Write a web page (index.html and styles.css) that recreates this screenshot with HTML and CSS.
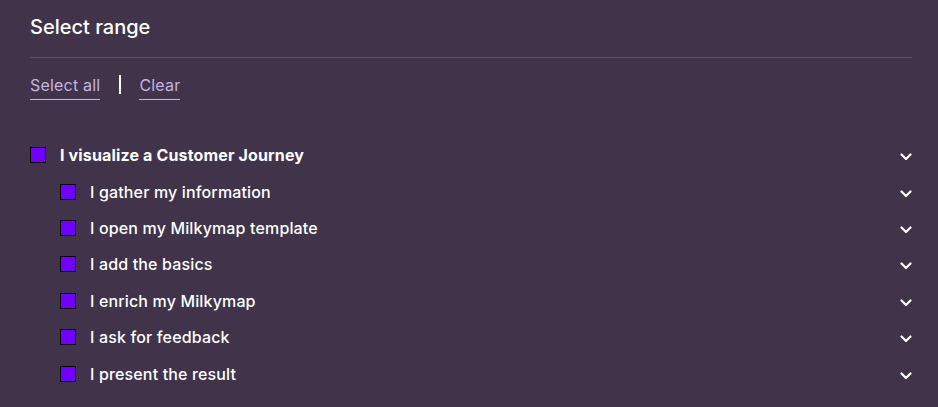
FILE: index.html
```html
<!DOCTYPE html>
<html lang="en">
<head>
<meta charset="UTF-8" />
<title>Select range</title>
<link rel="stylesheet" href="styles.css">
</head>
<body>

<div class="panel">
  <h2 class="title">Select range</h2>

  <div class="actions">
    <a class="action">Select all</a>
    <span class="sep"></span>
    <a class="action">Clear</a>
  </div>

  <ul class="tree">
    <li class="row parent">
      <span class="box"></span>
      <span class="label">I visualize a Customer Journey</span>
      <svg class="chev" viewBox="0 0 12 8"><path d="M1.5 1.5 6 6l4.5-4.5" /></svg>
    </li>
    <li class="row child">
      <span class="box"></span>
      <span class="label">I gather my information</span>
      <svg class="chev" viewBox="0 0 12 8"><path d="M1.5 1.5 6 6l4.5-4.5" /></svg>
    </li>
    <li class="row child">
      <span class="box"></span>
      <span class="label">I open my Milkymap template</span>
      <svg class="chev" viewBox="0 0 12 8"><path d="M1.5 1.5 6 6l4.5-4.5" /></svg>
    </li>
    <li class="row child">
      <span class="box"></span>
      <span class="label">I add the basics</span>
      <svg class="chev" viewBox="0 0 12 8"><path d="M1.5 1.5 6 6l4.5-4.5" /></svg>
    </li>
    <li class="row child">
      <span class="box"></span>
      <span class="label">I enrich my Milkymap</span>
      <svg class="chev" viewBox="0 0 12 8"><path d="M1.5 1.5 6 6l4.5-4.5" /></svg>
    </li>
    <li class="row child">
      <span class="box"></span>
      <span class="label">I ask for feedback</span>
      <svg class="chev" viewBox="0 0 12 8"><path d="M1.5 1.5 6 6l4.5-4.5" /></svg>
    </li>
    <li class="row child">
      <span class="box"></span>
      <span class="label">I present the result</span>
      <svg class="chev" viewBox="0 0 12 8"><path d="M1.5 1.5 6 6l4.5-4.5" /></svg>
    </li>
  </ul>
</div>

</body>
</html>
```

FILE: styles.css
```css
body {
  margin: 0; padding: 0;
  height: 100vh;
  background: #40334a;
  overflow: hidden;
  font-family: Inter, "Noto Sans", sans-serif;
  color: #fff;
}

.panel {
  padding: 14px 26px 0 30px;
}

.title {
  margin: 0;
  font-size: 20px;
  font-weight: 500;
  line-height: 26px;
  padding-bottom: 17px;
  border-bottom: 1px solid #61536b;
}

.actions {
  display: flex;
  align-items: center;
  margin-top: 15px;
  height: 28px;
}

.action {
  color: #c4b3e0;
  font-size: 16px;
  line-height: 20px;
  letter-spacing: 0.2px;
  padding-bottom: 4px;
  border-bottom: 1px solid #c4b3e0;
  cursor: pointer;
}

.sep {
  width: 2px;
  height: 19px;
  background: #fff;
  margin: 0 18px 6px 19px;
}

.tree {
  list-style: none;
  margin: 36px 0 0;
  padding: 0;
}

.row {
  display: flex;
  align-items: center;
  height: 36.4px;
}

.child {
  padding-left: 30px;
}

.box {
  width: 14px;
  height: 14px;
  background: #7000ff;
  border: 1px solid #000;
  margin-right: 14px;
  flex: none;
}

.label {
  flex: 1;
  font-size: 16px;
  font-weight: 500;
  line-height: 20px;
  letter-spacing: 0.15px;
}

.parent .label {
  font-weight: 700;
}

.chev {
  width: 12px;
  height: 8px;
  margin-top: 4px;
  fill: none;
  stroke: #fff;
  stroke-width: 2.2;
  stroke-linecap: round;
  stroke-linejoin: round;
}
```
